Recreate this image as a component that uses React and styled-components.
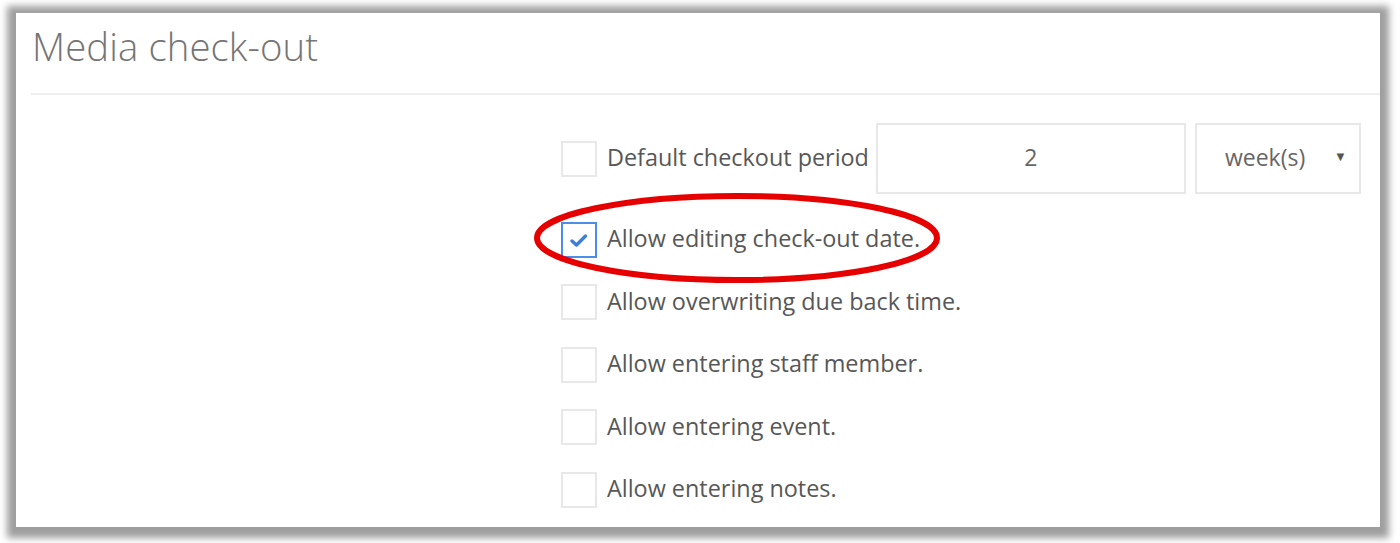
import React from "react";
import styled, { createGlobalStyle } from "styled-components";

const Global = createGlobalStyle`
  html, body {
    margin: 0;
    padding: 0;
    background: #ffffff;
  }
  body {
    font-family: "Open Sans", "Liberation Sans", sans-serif;
    overflow: hidden;
  }
`;

const Page = styled.div`
  width: 1400px;
  height: 543px;
  padding: 13px 20px 16px 16px;
  box-sizing: border-box;
`;

const Panel = styled.div`
  position: relative;
  height: 514px;
  background: #fff;
  box-shadow: 0 2px 7px 9px rgba(0, 0, 0, 0.38);
  overflow: hidden;
`;

const Header = styled.div`
  margin-left: 15px;
  height: 80px;
  border-bottom: 2px solid #eeeeee;
  display: flex;
  align-items: flex-start;
`;

const Title = styled.h1`
  margin: 8px 0 0 1px;
  font-size: 38.3px;
  font-weight: 300;
  color: #757575;
  line-height: 50px;
  letter-spacing: 0.1px;
`;

const Form = styled.div`
  display: flex;
  flex-direction: column;
  gap: 26.6px;
  padding: 28px 0 0 545px;
`;

const Row = styled.label`
  display: flex;
  align-items: center;
  gap: 10px;
  min-height: 36px;
  margin-bottom: ${(p) => (p.$extra ? "1px" : "0")};
`;

const Box = styled.span`
  width: 36px;
  height: 36px;
  box-sizing: border-box;
  flex: none;
  border: 2px solid ${(p) => (p.$checked ? "#4a8ee6" : "#e8e8e8")};
  display: flex;
  align-items: center;
  justify-content: center;
  background: #fff;
`;

const Text = styled.span`
  font-size: 23.4px;
  color: #575757;
  white-space: nowrap;
  margin-top: -3px;
`;

const Field = styled.div`
  width: 310px;
  height: 71px;
  box-sizing: border-box;
  border: 2px solid #e8e8e8;
  display: flex;
  align-items: center;
  justify-content: center;
  font-size: 23px;
  color: #666;
  margin-left: -3px;
  padding-bottom: 4px;
`;

const Select = styled.div`
  width: 166px;
  height: 71px;
  box-sizing: border-box;
  border: 2px solid #e8e8e8;
  display: flex;
  align-items: center;
  justify-content: space-between;
  padding: 0 12px 4px 28px;
  font-size: 23px;
  color: #666;
  margin-left: -1px;
`;

const Caret = styled.span`
  font-size: 13px;
  color: #555;
  margin-top: -2px;
`;

const Annotation = styled.svg`
  position: absolute;
  left: 518px;
  top: 166px;
  pointer-events: none;
`;

const Check = () => (
  <svg width="22" height="18" viewBox="0 0 22 18">
    <path
      d="M4 10 L8.5 14 L17.5 5"
      fill="none"
      stroke="#3d7fd8"
      strokeWidth="3.4"
      strokeLinecap="round"
      strokeLinejoin="round"
    />
  </svg>
);

const options = [
  { text: "Allow editing check-out date.", checked: true },
  { text: "Allow overwriting due back time." },
  { text: "Allow entering staff member." },
  { text: "Allow entering event." },
  { text: "Allow entering notes." },
];

export default function App() {
  return (
    <Page>
      <Global />
      <Panel>
        <Header>
          <Title>Media check-out</Title>
        </Header>
        <Form>
          <Row $extra>
            <Box />
            <Text>Default checkout period</Text>
            <Field>2</Field>
            <Select>
              <span>week(s)</span>
              <Caret>▼</Caret>
            </Select>
          </Row>
          {options.map((o) => (
            <Row key={o.text}>
              <Box $checked={o.checked}>{o.checked && <Check />}</Box>
              <Text>{o.text}</Text>
            </Row>
          ))}
        </Form>
        <Annotation width="430" height="120" viewBox="0 0 430 120">
          <ellipse
            cx="203"
            cy="59"
            rx="200"
            ry="42"
            fill="none"
            stroke="#e60000"
            strokeWidth="6"
          />
        </Annotation>
      </Panel>
    </Page>
  );
}
